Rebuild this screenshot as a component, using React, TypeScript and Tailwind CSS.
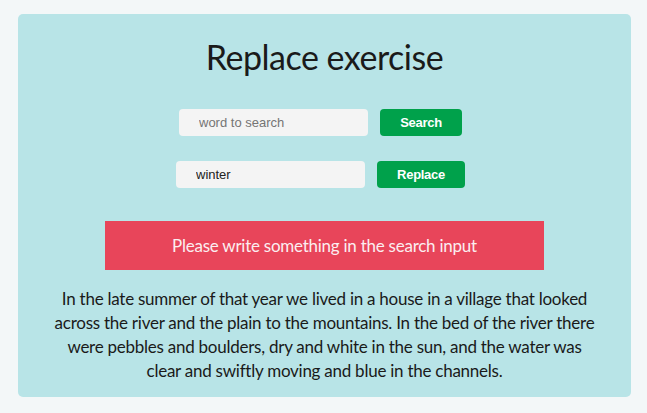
import { useState } from "react";

const para =
  "In the late summer of that year we lived in a house in a village that looked across the river and the plain to the mountains. In the bed of the river there were pebbles and boulders, dry and white in the sun, and the water was clear and swiftly moving and blue in the channels.";

export default function App() {
  const [search, setSearch] = useState("");
  const [replace, setReplace] = useState("winter");

  return (
    <div className="min-h-[413px] w-full bg-[#f3f7f8] pt-[14px] px-[16px]">
      <div className="mx-[2px] w-[613px] rounded-[5px] bg-[#b8e4e7] pt-[22px] pb-[14px] font-['Lato','Noto_Sans',sans-serif] text-[#1a1a1a]">
        <h1 className="text-center text-[34px] leading-[42px] tracking-[-0.5px]">Replace exercise</h1>

        {/* Search row */}
        <div className="mt-[31px] flex justify-center gap-[12px] pr-[8px]">
          <input
            value={search}
            onChange={(e) => setSearch(e.target.value)}
            placeholder="word to search"
            className="h-[27px] w-[189px] rounded-[4px] bg-[#f4f4f4] pl-[20px] font-['Liberation_Sans',Arial,sans-serif] text-[13px] text-[#333] outline-none placeholder:text-[#757575]"
          />
          <button className="h-[27px] w-[82px] rounded-[4px] bg-[#00a14b] font-['Liberation_Sans',Arial,sans-serif] text-[13px] font-bold tracking-[-0.3px] text-white">
            Search
          </button>
        </div>

        {/* Replace row */}
        <div className="mt-[25px] flex justify-center gap-[12px] pr-[8px]">
          <input
            value={replace}
            onChange={(e) => setReplace(e.target.value)}
            className="h-[27px] w-[189px] rounded-[4px] bg-[#f4f4f4] pl-[20px] font-['Liberation_Sans',Arial,sans-serif] text-[13px] text-[#222] outline-none"
          />
          <button className="h-[27px] w-[88px] rounded-[4px] bg-[#00a14b] font-['Liberation_Sans',Arial,sans-serif] text-[13px] font-bold tracking-[-0.3px] text-white">
            Replace
          </button>
        </div>

        <div className="mx-auto mt-[33px] flex h-[49px] w-[439px] items-center justify-center bg-[#e8455a] text-[17px] tracking-[-0.25px] text-[#fbeef0]">
          Please write something in the search input
        </div>

        <p className="mx-auto mt-[17px] w-[545px] text-center text-[17px] leading-[24px] tracking-[-0.25px]">{para}</p>
      </div>
    </div>
  );
}
